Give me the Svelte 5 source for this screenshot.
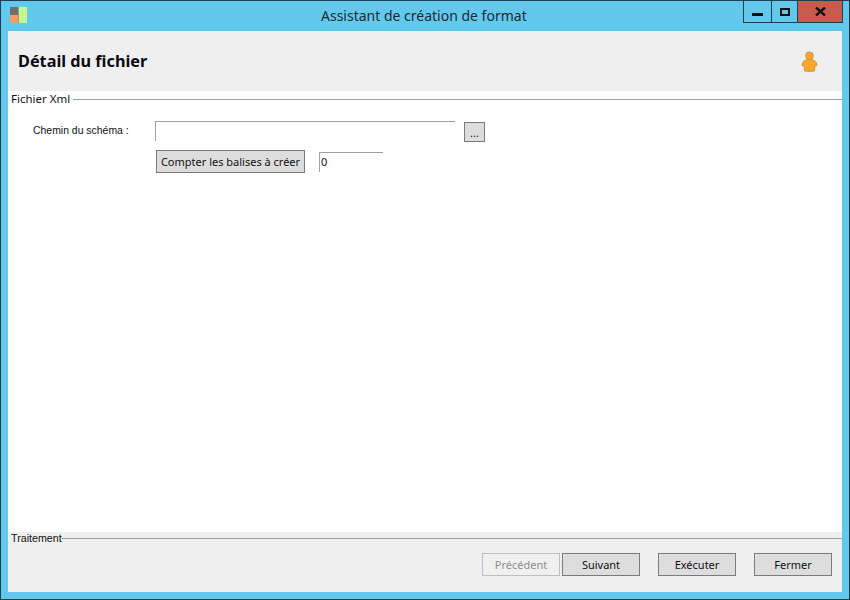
<script>
	let schemaPath = "";
	let tagCount = "0";
</script>

<div class="window">
	<div class="titlebar">
		<svg class="app-icon" width="17" height="17" viewBox="0 0 17 17">
			<rect x="0" y="0" width="8" height="8" fill="#6f6f6f" />
			<rect x="0" y="8" width="8" height="8" fill="#f89a68" />
			<rect x="8" y="0" width="1" height="16" fill="#7fae8c" />
			<rect x="9" y="0" width="8" height="16" fill="#c6f58e" />
		</svg>
		<div class="title">Assistant de création de format</div>
		<div class="controls">
			<div class="ctl min"><span></span></div>
			<div class="ctl max"><span></span></div>
			<div class="ctl close">
				<svg width="11" height="9" viewBox="0 0 11 9">
					<path d="M1 0.5 L10 8.5 M10 0.5 L1 8.5" stroke="#111" stroke-width="2.4" fill="none" />
				</svg>
			</div>
		</div>
	</div>

	<div class="client">
		<header class="head">
			<h1>Détail du fichier</h1>
			<svg class="user" width="17" height="21" viewBox="0 0 17 21">
				<path d="M3.5 9.5 Q8.5 7 13.5 9.5 Q15.8 11 16 14.5 L13.8 15.5 L13.5 20 Q8.5 20.8 3.5 20 L3.2 15.5 L1 14.5 Q1.2 11 3.5 9.5 Z" fill="#fba72c" stroke="#c98a3a" stroke-width="0.8" />
				<circle cx="8.5" cy="4.8" r="3.9" fill="#fba72c" stroke="#c98a3a" stroke-width="0.8" />
			</svg>
		</header>

		<main class="body">
			<div class="group-title">
				<span>Fichier Xml</span>
				<i></i>
			</div>
			<div class="row path-row">
				<label for="schema">Chemin du schéma :</label>
				<input id="schema" class="path" type="text" bind:value={schemaPath} />
				<button class="btn browse">...</button>
			</div>
			<div class="row count-row">
				<button class="btn count">Compter les balises à créer</button>
				<input class="tags" type="text" bind:value={tagCount} />
			</div>
		</main>

		<footer class="foot">
			<div class="group-title small">
				<span>Traitement</span>
				<i></i>
			</div>
			<div class="actions">
				<button class="btn act" disabled>Précédent</button>
				<button class="btn act next">Suivant</button>
				<button class="btn act run">Exécuter</button>
				<button class="btn act close-btn">Fermer</button>
			</div>
		</footer>
	</div>
</div>

<style>
	:global(body) {
		margin: 0;
	}

	.window {
		box-sizing: border-box;
		width: 850px;
		height: 600px;
		display: flex;
		flex-direction: column;
		background: #63c9ec;
		border: 1px solid #1c3f52;
		font-family: "Noto Sans", sans-serif;
		color: #111;
	}

	.titlebar {
		height: 30px;
		flex: none;
		display: flex;
		align-items: flex-start;
		position: relative;
	}

	.app-icon {
		margin: 6px 0 0 9px;
	}

	.title {
		position: absolute;
		left: 320px;
		top: 5px;
		font-size: 14px;
		line-height: 20px;
		color: #1a2a33;
	}

	.controls {
		margin-left: auto;
		margin-right: 6px;
		display: flex;
		height: 21px;
		border: 1px solid #1c3f52;
		border-top: none;
	}

	.ctl {
		display: flex;
		align-items: center;
		justify-content: center;
	}

	.min {
		width: 27px;
		border-right: 1px solid #1c3f52;
	}

	.min span {
		width: 11px;
		height: 3px;
		background: #111;
		margin-top: 5px;
	}

	.max {
		width: 25px;
	}

	.max span {
		box-sizing: border-box;
		width: 10px;
		height: 8px;
		border: 2px solid #111;
	}

	.close {
		width: 44px;
		background: #c75b50;
		border-left: 1px solid #1c3f52;
	}

	.client {
		flex: 1;
		margin: 0 7px 7px;
		display: flex;
		flex-direction: column;
		background: #fff;
		min-height: 0;
	}

	.head {
		height: 60px;
		flex: none;
		background: #efefef;
		display: flex;
		align-items: center;
		justify-content: space-between;
		padding: 0 24px 0 10px;
	}

	h1 {
		margin: 0;
		font-family: "Noto Sans", sans-serif;
		font-size: 16.25px;
		font-weight: 700;
		color: #0a0a14;
	}

	.body {
		flex: 1;
		font-size: 11px;
	}

	.group-title {
		display: flex;
		align-items: center;
		padding-left: 3px;
		font-size: 11.5px;
		line-height: 14px;
		margin-top: 1px;
	}

	.group-title span {
		white-space: nowrap;
	}

	.group-title i {
		flex: 1;
		height: 1px;
		background: #a0a0a0;
		margin-left: 3px;
	}

	.group-title.small {
		font-family: "Liberation Sans", sans-serif;
		font-size: 10.7px;
	}

	.group-title.small i {
		margin-left: 0;
	}

	.row {
		display: flex;
		align-items: flex-start;
	}

	.path-row {
		padding: 15px 0 0 25px;
	}

	label {
		width: 122px;
		line-height: 20px;
		font-family: "Liberation Sans", sans-serif;
		font-size: 10.45px;
	}

	input {
		box-sizing: border-box;
		background: #fff;
		border: none;
		border-top: 1px solid #a0a0a0;
		border-left: 1px solid #a0a0a0;
		outline: none;
		padding: 0 2px;
		font-family: inherit;
		font-size: 11px;
		color: #111;
	}

	.path {
		width: 300px;
		height: 20px;
	}

	.btn {
		box-sizing: border-box;
		background: #dddddd;
		border: 1px solid #7a7a7a;
		font-family: inherit;
		font-size: 11px;
		color: #111;
		padding: 0;
	}

	.browse {
		width: 21px;
		height: 20px;
		margin: 1px 0 0 9px;
	}

	.count-row {
		padding: 8px 0 0 148px;
	}

	.count {
		width: 149px;
		height: 23px;
	}

	.tags {
		width: 64px;
		height: 20px;
		margin: 2px 0 0 14px;
		padding: 0 1px 2px;
	}

	.foot {
		height: 60px;
		flex: none;
		background: #efefef;
		font-size: 11px;
	}

	.foot .group-title {
		margin-top: 0;
		line-height: 13px;
	}

	.actions {
		display: flex;
		justify-content: flex-end;
		padding: 8px 10px 0 0;
	}

	.act {
		width: 78px;
		height: 23px;
	}

	.act:disabled {
		background: #f0f0f0;
		border-color: #bfbfbf;
		color: #8d8d8d;
	}

	.next {
		margin-left: 2px;
	}

	.run {
		margin-left: 18px;
	}

	.close-btn {
		margin-left: 18px;
	}
</style>
